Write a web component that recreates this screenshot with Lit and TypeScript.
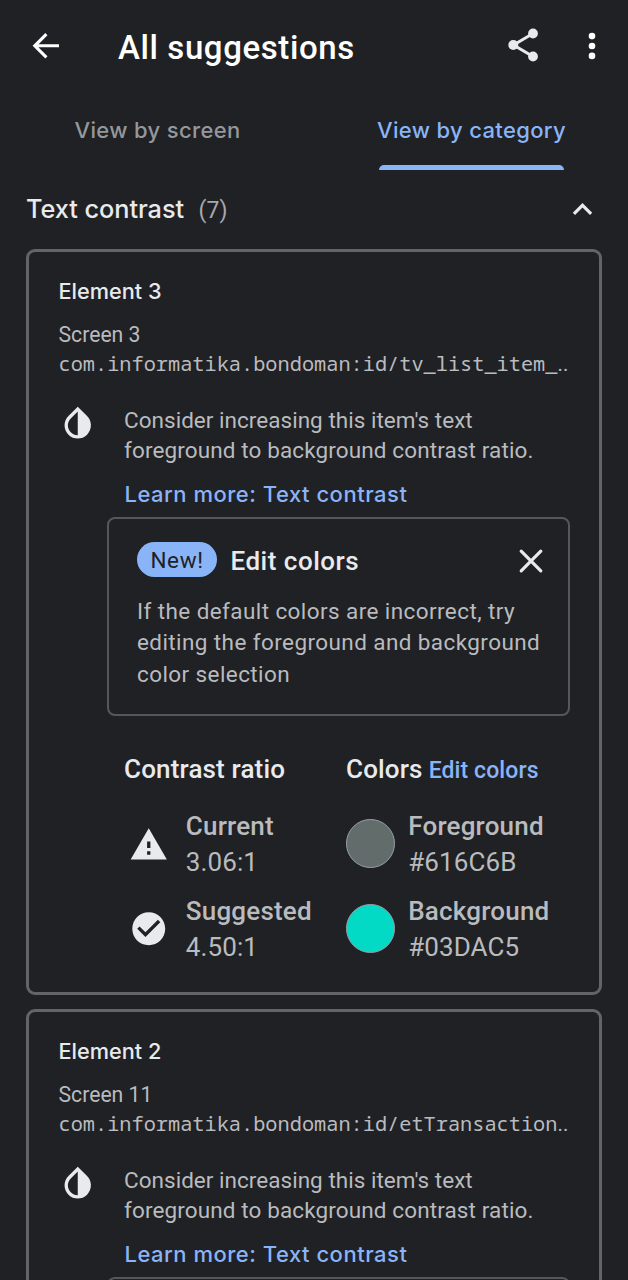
import { LitElement, html, css, svg, nothing } from "lit";
import { customElement, property } from "lit/decorators.js";

interface ColorInfo {
  label: string;
  hex: string;
}

interface Suggestion {
  element: string;
  screen: string;
  resource: string;
  contrast?: {
    current: string;
    suggested: string;
    colors: ColorInfo[];
  };
}

const SUGGESTIONS: Suggestion[] = [
  {
    element: "Element 3",
    screen: "Screen 3",
    resource: "com.informatika.bondoman:id/tv_list_item_",
    contrast: {
      current: "3.06:1",
      suggested: "4.50:1",
      colors: [
        { label: "Foreground", hex: "#616C6B" },
        { label: "Background", hex: "#03DAC5" },
      ],
    },
  },
  {
    element: "Element 2",
    screen: "Screen 11",
    resource: "com.informatika.bondoman:id/etTransaction",
  },
];

const material = (d: string) =>
  html`<svg class="icon" viewBox="0 0 24 24" fill="#e8eaed">${svg`<path d=${d}></path>`}</svg>`;

const ICONS = {
  invert:
    "M17.66 7.93L12 2.27 6.34 7.93c-3.12 3.12-3.12 8.19 0 11.31C7.9 20.8 9.95 21.58 12 21.58s4.1-.78 5.66-2.34c3.12-3.12 3.12-8.19 0-11.31zM12 19.59c-1.6 0-3.11-.62-4.24-1.76C6.62 16.69 6 15.19 6 13.59s.62-3.11 1.76-4.24L12 5.1v14.49z",
  warning: "M1 21h22L12 2 1 21zm12-3h-2v-2h2v2zm0-4h-2v-4h2v4z",
  check:
    "M12 2C6.48 2 2 6.48 2 12s4.48 10 10 10 10-4.48 10-10S17.52 2 12 2zm-2 15l-5-5 1.41-1.41L10 14.17l7.59-7.59L19 8l-9 9z",
  collapse: "M12 8l-6 6 1.41 1.41L12 10.83l4.59 4.58L18 14z",
};

@customElement("edit-colors-hint")
class EditColorsHint extends LitElement {
  @property({ type: Boolean }) collapsed = false;

  static styles = css`
    :host {
      display: block;
      box-sizing: border-box;
      height: 199px;
      border: 2px solid #55575b;
      border-radius: 8px;
      padding: 23px 24px 0 28px;
    }
    .top {
      display: flex;
      align-items: center;
      height: 35px;
    }
    .chip {
      width: 80px;
      height: 35px;
      border-radius: 18px;
      background: #8ab4f8;
      color: #202124;
      font-size: 22.5px;
      line-height: 36px;
      letter-spacing: 0.6px;
      text-align: center;
    }
    .title {
      flex: 1;
      margin: 3px 0 0 13.5px;
      color: #e8eaed;
      font-weight: 500;
      font-size: 26px;
      line-height: 32px;
      letter-spacing: 0.5px;
    }
    .close {
      display: block;
      width: 26px;
      height: 26px;
      margin-top: 3px;
    }
    .text {
      margin: 18.7px 0 0;
      color: #b9bbbf;
      font-size: 22.5px;
      line-height: 31.8px;
      letter-spacing: 0.41px;
      white-space: nowrap;
    }
  `;

  render() {
    if (this.collapsed) return nothing;
    return html`
      <div class="top">
        <span class="chip">New!</span>
        <span class="title">Edit colors</span>
        <svg class="close" viewBox="0 0 26 26" fill="none" stroke="#e8eaed" stroke-width="3.2" stroke-linecap="round">
          <path d="M3.2 3.2L22.8 22.8M22.8 3.2L3.2 22.8"></path>
        </svg>
      </div>
      <p class="text">
        If the default colors are incorrect, try<br />editing the foreground and background<br />color selection
      </p>
    `;
  }
}

@customElement("suggestion-card")
class SuggestionCard extends LitElement {
  @property({ attribute: false }) item!: Suggestion;

  static styles = css`
    :host {
      display: block;
      box-sizing: border-box;
      flex: none;
      height: 746px;
      border: 3px solid #626468;
      border-radius: 9px;
      padding: 24px 29px 0;
    }
    .name {
      color: #e8eaed;
      font: 500 21.7px/30px Inter, sans-serif;
      letter-spacing: 0;
      margin-left: 0.5px;
    }
    .screen {
      margin: 15px 0 0 0.5px;
      font-size: 21.2px;
      line-height: 28px;
    }
    .resource {
      height: 28px;
      margin-left: 0.5px;
      font: 20.3px/28px "Noto Sans Mono", monospace;
      white-space: nowrap;
    }
    .dots {
      font-family: Roboto, sans-serif;
      letter-spacing: 0.2px;
    }
    .advice {
      display: flex;
      margin-top: 28px;
    }
    .icon {
      display: block;
      flex: none;
      width: 39.5px;
      height: 39.5px;
    }
    .advice .icon {
      margin: -2px 26.5px 0 0;
    }
    .message {
      margin: 0;
      font-size: 22.5px;
      line-height: 30.2px;
      letter-spacing: 0.03px;
      white-space: nowrap;
    }
    .wide {
      letter-spacing: 0.12px;
    }
    .learn {
      margin: 13.6px 0 0 66.5px;
      color: #8ab4f8;
      font: 500 22px/30px Inter, sans-serif;
      letter-spacing: 0.5px;
    }
    edit-colors-hint {
      margin: 8px 0 0 49px;
      width: 463px;
    }
    .details {
      display: grid;
      grid-template-columns: 222px auto;
      margin: 36.8px 0 0 66px;
    }
    .heading {
      display: flex;
      align-items: baseline;
      gap: 6px;
      height: 32.4px;
      color: #e8eaed;
      font-weight: 500;
      font-size: 26px;
      line-height: 32px;
      letter-spacing: 0.16px;
      white-space: nowrap;
    }
    .edit {
      color: #8ab4f8;
      font-size: 23px;
      letter-spacing: 0.1px;
    }
    .rows {
      display: flex;
      flex-direction: column;
      gap: 13.7px;
      margin-top: 24.2px;
    }
    .row {
      display: flex;
      align-items: center;
      height: 71px;
      font-size: 26px;
      line-height: 35.5px;
      letter-spacing: 0.1px;
    }
    .row .icon {
      margin: -1px 17.3px 0 5px;
    }
    .label {
      font-weight: 500;
      letter-spacing: 0.2px;
    }
    .swatch {
      box-sizing: border-box;
      width: 49px;
      height: 49px;
      margin: -3px 13.2px 0 0;
      border: 1px solid #9aa0a6;
      border-radius: 50%;
    }
  `;

  private ratio(icon: string, label: string, value: string) {
    return html`<div class="row">
      ${material(icon)}
      <div>
        <div class="label">${label}</div>
        <div>${value}</div>
      </div>
    </div>`;
  }

  render() {
    const { element, screen, resource, contrast } = this.item;
    return html`
      <div class="name">${element}</div>
      <div class="screen">${screen}</div>
      <div class="resource">${resource}<span class="dots">..</span></div>
      <div class="advice">
        ${material(ICONS.invert)}
        <p class="message">
          Consider increasing this item's text<br /><span class="wide">foreground to background contrast ratio.</span>
        </p>
      </div>
      <div class="learn">Learn more: Text contrast</div>
      <edit-colors-hint .collapsed=${!contrast}></edit-colors-hint>
      ${contrast
        ? html`<div class="details">
            <div>
              <div class="heading">Contrast ratio</div>
              <div class="rows">
                ${this.ratio(ICONS.warning, "Current", contrast.current)}
                ${this.ratio(ICONS.check, "Suggested", contrast.suggested)}
              </div>
            </div>
            <div>
              <div class="heading">Colors<span class="edit">Edit colors</span></div>
              <div class="rows">
                ${contrast.colors.map(
                  (c) => html`<div class="row">
                    <span class="swatch" style="background:${c.hex}"></span>
                    <div>
                      <div class="label">${c.label}</div>
                      <div>${c.hex}</div>
                    </div>
                  </div>`
                )}
              </div>
            </div>
          </div>`
        : nothing}
    `;
  }
}

@customElement("app-root")
class AppRoot extends LitElement {
  static styles = css`
    :host {
      display: flex;
      flex-direction: column;
      height: 1280px;
      overflow: hidden;
      background: #202124;
      color: #b9bbbf;
      font-family: Roboto, sans-serif;
    }
    .bar {
      display: flex;
      align-items: center;
      flex: none;
      height: 92px;
      box-sizing: border-box;
      padding: 0 16px 0 26px;
    }
    .back,
    .more {
      display: block;
      width: 40px;
      height: 40px;
    }
    h1 {
      flex: 1;
      margin: 3px 0 0 52px;
      color: #fff;
      font-weight: 500;
      font-size: 33px;
      line-height: 40px;
      letter-spacing: 0.6px;
    }
    .share {
      display: block;
      width: 34px;
      height: 36px;
      margin: -2px 32px 0 0;
    }
    .tabs {
      display: grid;
      grid-template-columns: 1fr 1fr;
      flex: none;
      height: 78px;
    }
    .tab {
      display: flex;
      flex-direction: column;
      align-items: center;
      justify-content: space-between;
      padding-top: 23px;
      color: #94979b;
      font: 500 22px/30px Inter, sans-serif;
      letter-spacing: 0.34px;
      text-indent: 1px;
    }
    .active {
      color: #8ab4f8;
    }
    .indicator {
      width: 185px;
      height: 5px;
      border-radius: 5px 5px 0 0;
      background: #8ab4f8;
    }
    .section {
      display: flex;
      align-items: center;
      flex: none;
      height: 79px;
      padding: 0 26px;
    }
    .section h2 {
      margin: -1px 0 0;
      color: #e8eaed;
      font: 500 25.3px/34px Inter, sans-serif;
      letter-spacing: -0.05px;
    }
    .count {
      flex: 1;
      margin: 2px 0 0 14.5px;
      color: #a6a8ac;
      font-size: 23px;
      line-height: 32px;
    }
    .icon {
      display: block;
      width: 39px;
      height: 39px;
    }
    .list {
      display: flex;
      flex-direction: column;
      gap: 14px;
      padding: 0 26px;
    }
  `;

  render() {
    return html`
      <header class="bar">
        <svg class="back" viewBox="0 0 40 40" fill="none" stroke="#fff" stroke-width="3.1">
          <path d="M33 19.8H9.5M20.4 8.2L8.8 19.8L20.4 31.4"></path>
        </svg>
        <h1>All suggestions</h1>
        <svg class="share" viewBox="0 0 34 36" fill="#e8eaed" stroke="#e8eaed">
          <path d="M27 6.5L7.5 18L27 29.5" fill="none" stroke-width="3"></path>
          <circle cx="27" cy="6.5" r="4.9" stroke="none"></circle>
          <circle cx="7.3" cy="18" r="5" stroke="none"></circle>
          <circle cx="27" cy="29.5" r="4.9" stroke="none"></circle>
        </svg>
        <svg class="more" viewBox="0 0 40 40" fill="#fff">
          <circle cx="20" cy="10.1" r="3.3"></circle>
          <circle cx="20" cy="20" r="3.3"></circle>
          <circle cx="20" cy="29.9" r="3.3"></circle>
        </svg>
      </header>
      <nav class="tabs">
        <div class="tab">View by screen</div>
        <div class="tab active">View by category<span class="indicator"></span></div>
      </nav>
      <div class="section">
        <h2>Text contrast</h2>
        <span class="count">(7)</span>
        ${material(ICONS.collapse)}
      </div>
      <main class="list">
        ${SUGGESTIONS.map((s) => html`<suggestion-card .item=${s}></suggestion-card>`)}
      </main>
    `;
  }
}
